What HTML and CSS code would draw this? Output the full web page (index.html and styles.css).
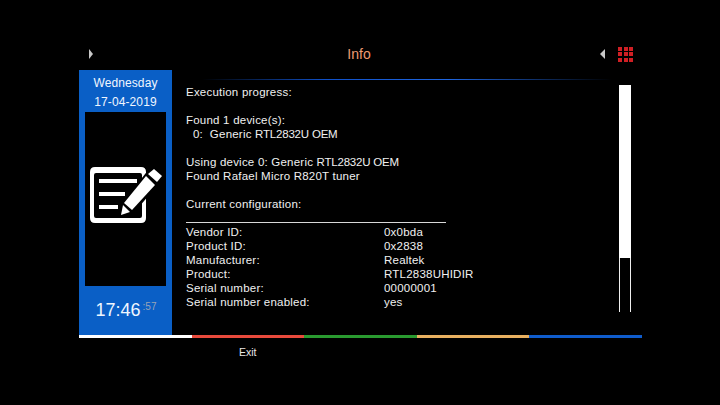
FILE: index.html
```html
<!DOCTYPE html>
<html lang="en">
<head>
<meta charset="utf-8">
<title>Info</title>
<link rel="stylesheet" href="styles.css">
</head>
<body>
<div class="screen">
  <header class="top">
    <svg class="arrow" width="6" height="10" viewBox="0 0 6 10"><path d="M1 0L5 5L1 10Z" fill="#c8c8c8"/></svg>
    <div class="title">Info</div>
    <svg class="arrow" width="6" height="10" viewBox="0 0 6 10"><path d="M5 0L0 5L5 10Z" fill="#c8c8c8"/></svg>
    <div class="grid-icon"><i></i><i></i><i></i><i></i><i></i><i></i><i></i><i></i><i></i></div>
  </header>
  <main class="main">
    <aside class="side">
      <div class="date">
        <div>Wednesday</div>
        <div>17-04-2019</div>
      </div>
      <div class="icon-box">
        <svg class="note" width="74" height="57" viewBox="0 0 74 57">
          <path fill-rule="evenodd" fill="#fff" d="M5 0H51Q56 0 56 5V51Q56 56 51 56H5Q0 56 0 51V5Q0 0 5 0ZM6 6Q4 6 4 8V49Q4 51 6 51H50Q52 51 52 49V8Q52 6 50 6Z"/>
          <rect x="9" y="12" width="38" height="4" fill="#fff"/>
          <rect x="9" y="25" width="26" height="4" fill="#fff"/>
          <rect x="9" y="38" width="19" height="4" fill="#fff"/>
          <path fill="#000" stroke="#000" stroke-width="4" d="M56 9L65 18L42 45L31 48L35 36Z"/>
          <path fill="#fff" d="M56 9L65 18L42 43L34 36Z"/>
          <path fill="#fff" d="M58 7L64 2L72 9L67 15Z"/>
          <path fill="#fff" d="M33 38L40 45L31 48Z"/>
        </svg>
      </div>
      <div class="clock"><span class="hm">17:46</span><span class="sec">:57</span></div>
    </aside>
    <section class="content">
      <div class="glow"></div>
      <div class="body">
        <div class="log">
          <p>Execution progress:</p>
          <p class="gap">Found 1 device(s):</p>
          <p class="indent">0:&nbsp; Generic <span class="caps">RTL2832U OEM</span></p>
          <p class="gap">Using device 0: Generic <span class="caps">RTL2832U OEM</span></p>
          <p>Found Rafael Micro R820T tuner</p>
          <p class="gap">Current configuration:</p>
          <div class="rule"></div>
          <dl class="kv">
            <dt>Vendor ID:</dt><dd>0x0bda</dd>
            <dt>Product ID:</dt><dd>0x2838</dd>
            <dt>Manufacturer:</dt><dd>Realtek</dd>
            <dt>Product:</dt><dd>RTL2838UHIDIR</dd>
            <dt>Serial number:</dt><dd>00000001</dd>
            <dt>Serial number enabled:</dt><dd>yes</dd>
          </dl>
        </div>
        <div class="scroll"><div class="thumb"></div></div>
      </div>
    </section>
  </main>
  <div class="bar"><i class="white"></i><i class="red"></i><i class="green"></i><i class="orange"></i><i class="blue"></i></div>
  <div class="keys"><span class="exit">Exit</span></div>
</div>
</body>
</html>
```
FILE: styles.css
```css
* { box-sizing: border-box; margin: 0; padding: 0; }
html, body { background: #000; }
body { width: 720px; height: 405px; overflow: hidden; font-family: "Liberation Sans", Arial, sans-serif; color: #e8e8e8; }
.screen { width: 720px; height: 405px; padding: 0 78px 0 79px; display: flex; flex-direction: column; }
.top { height: 70px; display: flex; align-items: center; padding: 38px 9px 0 9px; }
.top .arrow { flex: none; }
.title { flex: 1; text-align: center; font-size: 14px; color: #ee9a72; padding-left: 24px; }
.grid-icon { display: grid; grid-template-columns: repeat(3, 4px); grid-auto-rows: 4px; gap: 1.5px; margin-left: 12px; }
.grid-icon i { background: #d01f24; }
.main { height: 265px; display: flex; }
.side { width: 93px; background: #0a5fc6; display: flex; flex-direction: column; padding: 0 6px; }
.date { height: 42px; padding-top: 4px; text-align: center; font-size: 12px; line-height: 19px; letter-spacing: .1px; color: #f0f6ff; }
.icon-box { height: 174px; background: #000; display: flex; align-items: flex-start; padding: 55px 0 0 5px; }
.clock { flex: 1; display: flex; justify-content: center; align-items: flex-start; padding-top: 14px; gap: 2px; padding-left: 1px; }
.hm { font-size: 18px; line-height: 20px; color: #eef6ff; }
.sec { font-size: 10px; line-height: 12px; margin-top: 1px; color: #98a4b6; }
.content { flex: 1; display: flex; flex-direction: column; }
.glow { height: 1px; margin: 9px 30px 0 30px; background: linear-gradient(90deg, #000, #0f50c8 30%, #1f66e0 60%, #000); }
.body { flex: 1; display: flex; padding: 5px 11px 0 14px; }
.log { flex: 1; font-size: 11.5px; line-height: 14px; letter-spacing: .22px; color: #f0f0f0; }
.log p { height: 14px; white-space: pre; }
.log .gap { margin-top: 14px; }
.log .indent { padding-left: 7px; }
.caps { letter-spacing: -.2px; }
.rule { width: 260px; height: 1px; background: #d8d8d8; margin-top: 11px; margin-bottom: 2px; }
.kv { display: grid; grid-template-columns: 198px 1fr; grid-auto-rows: 14px; }
.scroll { width: 12px; height: 227px; border: solid #eee; border-width: 0 1px; }
.thumb { height: 173px; margin: 0 -1px; background: #fff; }
.bar { display: flex; height: 3px; }
.bar i { flex: 1; }
.white { background: #fff; }
.red { background: #e84a3c; }
.green { background: #2a9a30; }
.orange { background: #e8b060; }
.blue { background: #0f5ccc; }
.keys { padding: 8px 0 0 160px; font-size: 10.5px; line-height: 12px; color: #e8e8e8; }
```
